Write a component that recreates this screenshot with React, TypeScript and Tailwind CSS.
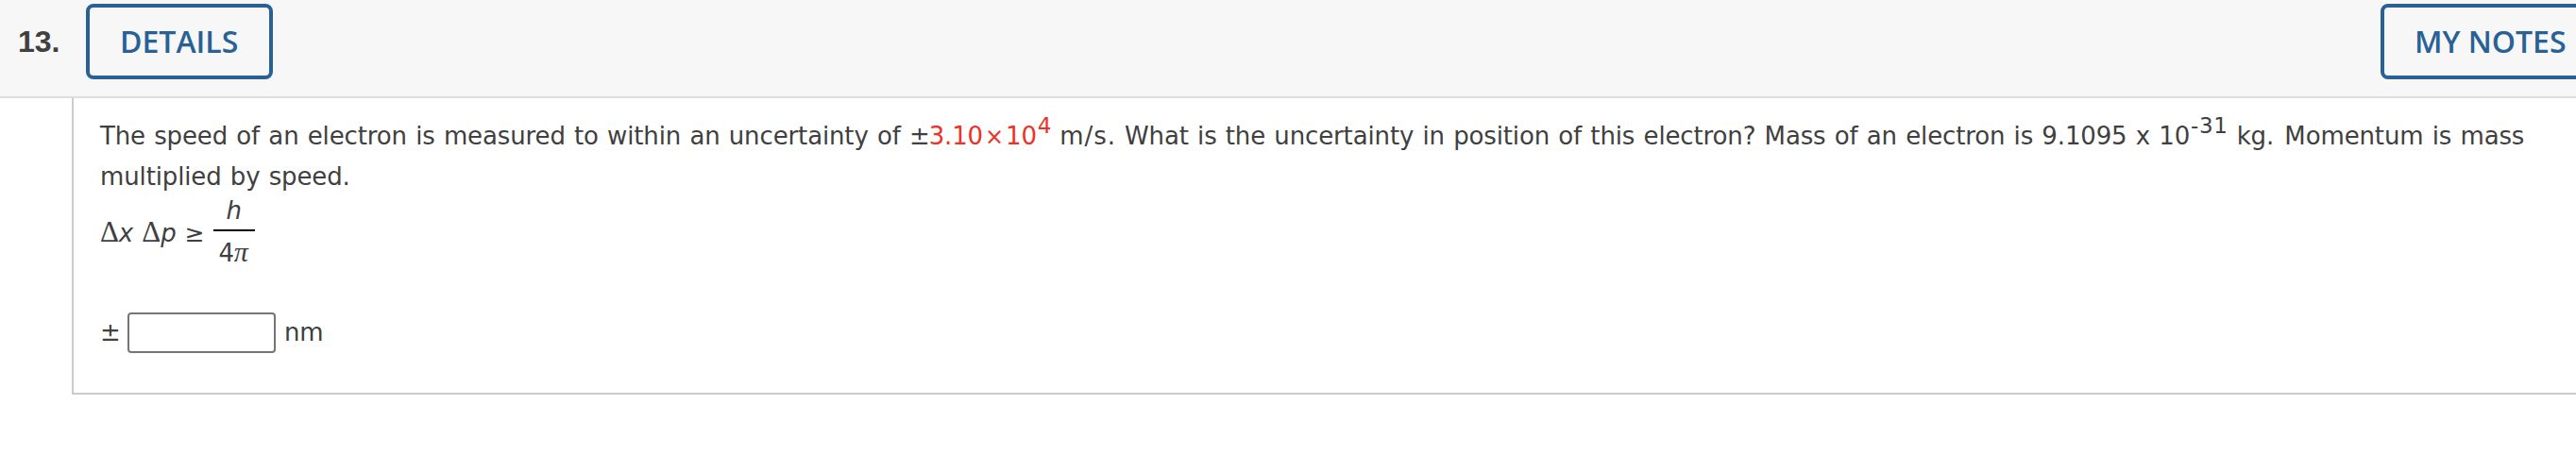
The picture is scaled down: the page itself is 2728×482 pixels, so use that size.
type ActionButtonProps = {
    label: string;
    className?: string;
};

function ActionButton({ label, className = "" }: ActionButtonProps) {
    return (
        <button
            type="button"
            className={`h-[80px] shrink-0 whitespace-nowrap rounded-[8px] border-4 border-[#286195] pl-[32px] text-left font-['Open_Sans',sans-serif] text-[32px] font-semibold leading-[72px] text-[#286195] ${className}`}
        >
            {label}
        </button>
    );
}

function Power({ value }: { value: string }) {
    return <sup className="-top-[12px] ml-[1px] text-[23px] leading-none tracking-[0.6px]">{value}</sup>;
}

function Delta() {
    return <span className="font-['Liberation_Serif',serif] text-[31px]">Δ</span>;
}

function Uncertainty() {
    return (
        <div className="flex h-[72px] items-start">
            <div className="whitespace-pre pt-[15px] leading-[44px]">
                <Delta />
                <i>x</i> <Delta />
                <i>p</i> <span className="text-[25px] leading-none">≥</span>
            </div>
            <div className="ml-[9px] flex w-[44px] flex-col items-center">
                <i className="h-[34px] leading-[28px]">h</i>
                <div className="h-[2px] w-full bg-black" />
                <div className="pr-[1px] pt-[4px] leading-[36px]">
                    4<i className="font-['Liberation_Serif',serif] text-[30px]">π</i>
                </div>
            </div>
        </div>
    );
}

export default function App() {
    return (
        <div className="h-[482px] w-full overflow-hidden bg-white text-[#404040]">
            <header className="flex h-[104px] items-start justify-between border-b-2 border-[#dddddd] bg-[#f7f7f7] pt-[4px]">
                <div className="flex">
                    <span className="w-[91px] pl-[19px] font-['Liberation_Sans',sans-serif] text-[32px] font-bold leading-[80px]">
                        13.
                    </span>
                    <ActionButton label="DETAILS" className="w-[198px]" />
                </div>
                <ActionButton label="MY NOTES" className="-mr-[34px] w-[241px]" />
            </header>

            <main className="ml-[76px] h-[314px] border-b-2 border-l-2 border-[#cccccc] pl-[28px] pt-[19px] font-['DejaVu_Sans',Verdana,sans-serif] text-[26px] tracking-[-0.13px] [word-spacing:1.1px]">
                <p className="whitespace-nowrap leading-[43px]">
                    The speed of an electron is measured to within an uncertainty of ±
                    <span className="-ml-[1px] text-[#ee3124]">
                        3.10
                        <span className="mx-[2px] text-[24px] leading-none">×</span>
                        10
                        <Power value="4" />
                    </span>{" "}
                    <span className="-ml-[1px] tracking-[0.9px]">m/s.</span> What is the uncertainty in position of this
                    electron? Mass of an electron is 9.1095 x 10
                    <Power value="-31" /> kg. <span className="ml-[2px]">Momentum is mass</span>
                    <br />
                    multiplied by speed.
                </p>
                <Uncertainty />
                <div className="mt-[50px] flex items-center">
                    <span className="w-[29px]">±</span>
                    <input
                        type="text"
                        className="h-[43px] w-[157px] rounded-[4px] border-2 border-[#757575] bg-white"
                    />
                    <span className="ml-[9px]">nm</span>
                </div>
            </main>
        </div>
    );
}
